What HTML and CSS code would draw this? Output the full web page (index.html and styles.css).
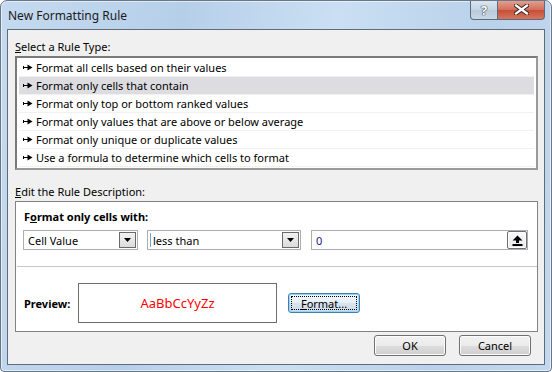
FILE: index.html
```html
<!DOCTYPE html>
<html>
<head>
    <title>New Formatting Rule</title>
    <link rel="stylesheet" href="styles.css">
</head>
<body>
    <div class="window">
        <div class="titlebar">
            <span class="title">New Formatting Rule</span>
            <div class="caption-buttons">
                <span class="cap-btn help">?</span>
                <span class="cap-btn close">
                    <svg width="15" height="11" viewBox="0 0 15 11">
                        <path d="M2 1.5 L13 9.5 M13 1.5 L2 9.5" stroke="#3a2a28" stroke-width="4.2" stroke-linecap="square"/>
                        <path d="M2 1.5 L13 9.5 M13 1.5 L2 9.5" stroke="#fff" stroke-width="2.2" stroke-linecap="square"/>
                    </svg>
                </span>
            </div>
        </div>

        <div class="client">
            <div class="label"><u>S</u>elect a Rule Type:</div>
            <ul class="rule-list">
                <li><svg class="arrow" width="10" height="7" viewBox="0 0 10 7"><path d="M0.5 2v3" stroke="#000" stroke-width="1"/><path d="M0 3h5v1H0z" fill="#000"/><path d="M4.5 0.5 L9.5 3.5 L4.5 6.5z" fill="#000"/></svg>Format all cells based on their values</li>
                <li class="selected"><svg class="arrow" width="10" height="7" viewBox="0 0 10 7"><path d="M0.5 2v3" stroke="#000" stroke-width="1"/><path d="M0 3h5v1H0z" fill="#000"/><path d="M4.5 0.5 L9.5 3.5 L4.5 6.5z" fill="#000"/></svg>Format only cells that contain</li>
                <li><svg class="arrow" width="10" height="7" viewBox="0 0 10 7"><path d="M0.5 2v3" stroke="#000" stroke-width="1"/><path d="M0 3h5v1H0z" fill="#000"/><path d="M4.5 0.5 L9.5 3.5 L4.5 6.5z" fill="#000"/></svg>Format only top or bottom ranked values</li>
                <li><svg class="arrow" width="10" height="7" viewBox="0 0 10 7"><path d="M0.5 2v3" stroke="#000" stroke-width="1"/><path d="M0 3h5v1H0z" fill="#000"/><path d="M4.5 0.5 L9.5 3.5 L4.5 6.5z" fill="#000"/></svg>Format only values that are above or below average</li>
                <li><svg class="arrow" width="10" height="7" viewBox="0 0 10 7"><path d="M0.5 2v3" stroke="#000" stroke-width="1"/><path d="M0 3h5v1H0z" fill="#000"/><path d="M4.5 0.5 L9.5 3.5 L4.5 6.5z" fill="#000"/></svg>Format only unique or duplicate values</li>
                <li><svg class="arrow" width="10" height="7" viewBox="0 0 10 7"><path d="M0.5 2v3" stroke="#000" stroke-width="1"/><path d="M0 3h5v1H0z" fill="#000"/><path d="M4.5 0.5 L9.5 3.5 L4.5 6.5z" fill="#000"/></svg>Use a formula to determine which cells to format</li>
            </ul>

            <div class="label label-edit"><u>E</u>dit the Rule Description:</div>
            <div class="desc">
                <div class="desc-title">F<u>o</u>rmat only cells with:</div>
                <div class="controls">
                    <div class="combo combo-type">
                        <span class="combo-text">Cell Value</span>
                        <span class="drop"><svg width="7" height="4" viewBox="0 0 7 4"><path d="M0 0h7L3.5 4z" fill="#000"/></svg></span>
                    </div>
                    <div class="combo combo-op">
                        <span class="caret"></span>
                        <span class="combo-text">less than</span>
                        <span class="drop"><svg width="7" height="4" viewBox="0 0 7 4"><path d="M0 0h7L3.5 4z" fill="#000"/></svg></span>
                    </div>
                    <div class="combo combo-value">
                        <span class="combo-text value-text">0</span>
                        <span class="ref-btn">
                            <svg width="11" height="11" viewBox="0 0 11 11"><path d="M5.5 0.5 L10.5 5.5 H7 V8 H4 V5.5 H0.5z" fill="#000"/><rect x="0.5" y="9" width="10" height="2" fill="#000"/></svg>
                        </span>
                    </div>
                </div>
                <div class="sep"></div>
                <div class="preview-row">
                    <span class="preview-label">Preview:</span>
                    <div class="preview-box">AaBbCcYyZz</div>
                    <button class="btn btn-format"><span class="focus-ring"><u>F</u>ormat...</span></button>
                </div>
            </div>

            <div class="footer">
                <button class="btn">OK</button>
                <button class="btn">Cancel</button>
            </div>
        </div>
    </div>
</body>
</html>
```

FILE: styles.css
```css
body {
    margin: 0;
    font-family: "Noto Sans", "Open Sans", sans-serif;
    font-size: 11px;
    color: #000;
    background: #fff;
}
.window {
    width: 552px;
    height: 372px;
    box-sizing: border-box;
    border: 1px solid #6a7785;
    border-radius: 7px 7px 4px 4px;
    background: linear-gradient(100deg, #c4daf0 0%, #b6cfe9 30%, #cadff3 55%, #b9d1ea 80%, #c3d8ee 100%);
    box-shadow: inset 0 0 0 1px rgba(255,255,255,0.55);
    overflow: hidden;
}
.titlebar {
    height: 28px;
    display: flex;
    justify-content: space-between;
    align-items: flex-start;
}
.title {
    font-size: 12px;
    color: #1b1b1b;
    margin: 6px 0 0 7px;
}
.caption-buttons {
    display: flex;
    margin-right: 6px;
    margin-top: -1px;
}
.cap-btn {
    height: 20px;
    display: flex;
    align-items: center;
    justify-content: center;
    box-sizing: border-box;
    border: 1px solid #5d6b79;
    border-top: none;
}
.help {
    width: 28px;
    border-radius: 0 0 0 4px;
    background: linear-gradient(#dce7f2, #c6d5e5 50%, #b8c9dc 51%, #c9d8e8);
    color: #fff;
    font-weight: bold;
    font-size: 13px;
    text-shadow: 0 0 1px #333, 0 0 1px #333, 0 0 1px #333;
}
.close {
    width: 47px;
    border-left: none;
    border-radius: 0 0 4px 0;
    background: linear-gradient(#e4a597, #d46f5c 50%, #c44c34 51%, #d8745e);
}
.client {
    margin: 0 6px 0 6px;
    height: 336px;
    box-sizing: border-box;
    border: 1px solid #5f6b77;
    background: #f0f0f0;
    padding: 9px 6px 0 7px;
}
.label {
    line-height: 16px;
    color: #000;
}
.rule-list {
    list-style: none;
    margin: 1px 0 0 0;
    padding: 1px 2px;
    height: 114px;
    box-sizing: border-box;
    border: 2px solid #6a6a6a;
    border-color: #7a7a7a #9a9a9a #9a9a9a #7a7a7a;
    background: #fff;
}
.rule-list li {
    height: 18px;
    box-sizing: border-box;
    border-bottom: 1px solid #f1f1f1;
    display: flex;
    align-items: center;
    padding-left: 4px;
    white-space: nowrap;
}
.rule-list li.selected {
    background: #dddde1;
}
.arrow {
    margin-right: 3px;
}
.label-edit {
    margin-top: 14px;
}
.desc {
    margin-top: 1px;
    height: 131px;
    box-sizing: border-box;
    border: 1px solid #828282;
    background: #fff;
    padding: 7px 0 0 7px;
}
.desc-title {
    font-weight: bold;
    line-height: 16px;
    padding-left: 1px;
}
.controls {
    display: flex;
    margin-top: 5px;
}
.combo {
    height: 20px;
    box-sizing: border-box;
    border: 1px solid #abadb3;
    display: flex;
    align-items: center;
    background: #fff;
}
.combo-type {
    width: 115px;
}
.combo-op {
    width: 154px;
    margin-left: 9px;
}
.combo-value {
    width: 217px;
    margin-left: 10px;
}
.combo-text {
    flex: 1;
    padding-left: 4px;
}
.value-text {
    color: #1a1a80;
}
.caret {
    width: 1px;
    height: 14px;
    background: #6aa0e0;
    margin-left: 2px;
}
.combo-op .combo-text {
    padding-left: 2px;
}
.drop {
    width: 17px;
    height: 16px;
    box-sizing: border-box;
    margin-right: 1px;
    border: 1px solid #6a6a6a;
    background: linear-gradient(#f2f2f2, #dcdcdc);
    display: flex;
    align-items: center;
    justify-content: center;
}
.ref-btn {
    width: 20px;
    height: 18px;
    box-sizing: border-box;
    border: 1px solid #707070;
    border-radius: 2px;
    background: linear-gradient(#fafafa, #e8e8e8);
    box-shadow: inset 0 0 0 1px #fff;
    display: flex;
    align-items: center;
    justify-content: center;
}
.sep {
    height: 1px;
    background: #c8c8c8;
    margin: 16px 0 0 -6px;
}
.preview-row {
    display: flex;
    align-items: center;
    margin-top: 16px;
}
.preview-label {
    font-weight: bold;
    width: 54px;
    padding-left: 1px;
}
.preview-box {
    width: 199px;
    height: 40px;
    box-sizing: border-box;
    border: 1px solid #6e6e6e;
    display: flex;
    align-items: center;
    justify-content: center;
    color: #ff0000;
    font-size: 13px;
}
.btn {
    font-family: inherit;
    font-size: 11px;
    color: #000;
    width: 72px;
    height: 21px;
    box-sizing: border-box;
    padding: 0;
    border: 1px solid #707070;
    border-radius: 3px;
    background: linear-gradient(#f2f2f2, #ebebeb 50%, #dddddd 51%, #cfcfcf);
    box-shadow: inset 0 0 0 1px #fcfcfc;
}
.btn-format {
    margin-left: 11px;
    height: 20px;
    border-color: #3c7fb1;
    box-shadow: inset 0 0 0 1px #9ad4f5;
    background: linear-gradient(#f2f7fb, #e6eef5 50%, #d7e3ed 51%, #cfdce8);
    display: flex;
    padding: 2px;
}
.focus-ring {
    flex: 1;
    border: 1px dotted #000;
    display: flex;
    align-items: center;
    justify-content: center;
}
.footer {
    display: flex;
    justify-content: flex-end;
    gap: 13px;
    margin-top: 3px;
    padding-right: 7px;
}
```
